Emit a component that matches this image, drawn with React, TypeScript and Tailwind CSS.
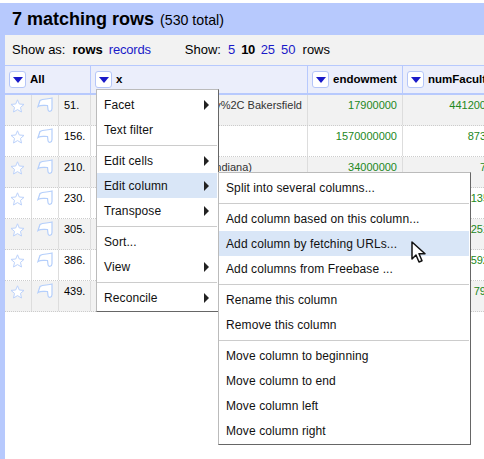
import React from 'react';

const rows = [
  { n: '51.', x: 'y%2C Bakersfield', e: '17900000', f: '441200' },
  { n: '156.', x: '', e: '1570000000', f: '873' },
  { n: '210.', x: 'ndiana)', e: '34000000', f: '7' },
  { n: '230.', x: '', e: '', f: '1135', wide: true },
  { n: '305.', x: '', e: '', f: '1251', wide: true },
  { n: '386.', x: '', e: '', f: '1592', wide: true },
  { n: '439.', x: '', e: '', f: '79' },
];

// Little square button with the blue triangle, used on each column header
function DropButton() {
  return (
    <span className="w-[17px] h-[17px] shrink-0 flex items-center justify-center rounded-[3px] border border-[#b5c6f8] bg-white">
      <span className="w-0 h-0 border-x-[5px] border-x-transparent border-t-[6px] border-t-[#1a1ac8]" />
    </span>
  );
}

function Star() {
  return (
    <svg width="15" height="14" viewBox="0 0 15 14" className="block">
      <path d="M7.500 .8l1.800 4.200 4.700.4-3.500 3 1 4.600-4-2.400-4 2.400 1-4.600-3.500-3 4.700-.4z" fill="#fff" stroke="#bcd2fb" strokeWidth="1" />
    </svg>
  );
}

function Flag() {
  return (
    <svg width="16" height="16" viewBox="0 0 16 16" className="block">
      <path d="M1 9.500L3 3.500C6 1.500 11 2.500 15 1V11.500C15 14.500 11.500 15.500 11 12.500L10.500 8.500C7 8.500 4 7.500 1 9.500z" fill="#fff" stroke="#b5cffb" strokeWidth="1.200" />
    </svg>
  );
}

function Arrow() {
  return <span className="absolute right-[8px] top-1/2 -translate-y-1/2 w-0 h-0 border-y-[5px] border-y-transparent border-l-[5px] border-l-[#222]" />;
}

function MenuItem({ label, sub, active }: { label: string; sub?: boolean; active?: boolean }) {
  return (
    <div className={`relative h-[25px] pl-[7px] flex items-center ${active ? 'bg-[#d9e6f7]' : ''}`}>
      {label}
      {sub && <Arrow />}
    </div>
  );
}

function Sep() {
  return <div className="h-px bg-[#ccc] my-[2.5px]" />;
}

function TableRow({ row, odd }: { row: (typeof rows)[number]; odd: boolean }) {
  return (
    <div className={`flex h-[31px] border-b border-dotted border-[#ccc] ${odd ? 'bg-[#f2f2f2]' : 'bg-white'}`}>
      <div className="w-[27px] shrink-0 border-r border-[#ddd] pl-[5px] pt-[4px]"><Star /></div>
      <div className="w-[27px] shrink-0 border-r border-[#ddd] pl-[5px] pt-[2px]"><Flag /></div>
      <div className="w-[32px] shrink-0 border-r border-[#ddd] pl-[5px] pt-[3px]">{row.n}</div>
      <div className="w-[217px] shrink-0 border-r border-[#ddd] pt-[3px] pr-[5px] text-right text-[#333] overflow-hidden whitespace-nowrap">
        {row.x === 'ndiana)' ? <span className="block pr-[50px]">{row.x}</span> : row.x}
      </div>
      <div className="w-[95px] shrink-0 border-r border-[#ddd] pt-[3px] pr-[5px] text-right text-[#282]">{row.e}</div>
      <div className={`w-[90px] shrink-0 pt-[3px] text-right text-[#282] ${row.wide ? 'pr-[4px]' : 'pr-[7px]'}`}>{row.f}</div>
    </div>
  );
}

export default function App() {
  return (
    <div className="relative w-[484px] h-[459px] overflow-hidden bg-white text-black font-['Liberation_Sans',Arial,sans-serif]">
      <div className="mt-[3px] h-[456px] bg-[#b7c9fd] pl-[5px] flex flex-col">
        <div className="h-[32px] shrink-0 pl-[7px] pt-[4px] flex items-baseline leading-[24px]">
          <span className="text-[18px] font-bold">7 matching rows</span>
          <span className="ml-[6px] text-[14.2px]">(530 total)</span>
        </div>
        <div className="flex-1 bg-white">
          <div className="h-[30px] bg-[#f2f2f2] flex items-center pl-[7px] whitespace-nowrap text-[13px]">
            <span>Show as:</span>
            <span className="font-bold ml-[7px]">rows</span>
            <span className="text-[#1a1ac8] ml-[6px] tracking-[-0.2px]">records</span>
            <span className="ml-[34px]">Show:</span>
            <span className="text-[#1a1ac8] ml-[7px]">5</span>
            <span className="font-bold ml-[6px] tracking-[-0.5px]">10</span>
            <span className="text-[#1a1ac8] ml-[6px]">25</span>
            <span className="text-[#1a1ac8] ml-[6px]">50</span>
            <span className="ml-[7px]">rows</span>
          </div>
          <div className="flex h-[29px] bg-[#ebeefb] border-y border-[#b7c9fd] font-bold whitespace-nowrap text-[11.5px]">
            <div className="w-[86px] shrink-0 border-r border-[#b7c9fd] pl-[4px] flex items-center gap-[4px]"><DropButton />All</div>
            <div className="w-[217px] shrink-0 border-r border-[#b7c9fd] pl-[4px] flex items-center gap-[4px]"><DropButton />x</div>
            <div className="w-[95px] shrink-0 border-r border-[#b7c9fd] pl-[4px] flex items-center gap-[4px]"><DropButton />endowment</div>
            <div className="w-[90px] shrink-0 pl-[4px] flex items-center gap-[4px]"><DropButton />numFaculty</div>
          </div>
          <div className="border-t border-[#b7c9fd] text-[11px] leading-[14px]">
            {rows.map((row, i) => (
              <TableRow key={row.n} row={row} odd={i % 2 === 0} />
            ))}
          </div>
        </div>
      </div>

      {/* Column menu */}
      <div className="absolute left-[96px] top-[89px] w-[123px] bg-white border border-[#bbb] border-r-[#666] border-b-[#666] pt-[2px] pb-px pr-px text-[12px] tracking-[0.1px] text-[#111]">
        <MenuItem label="Facet" sub />
        <MenuItem label="Text filter" />
        <Sep />
        <MenuItem label="Edit cells" sub />
        <MenuItem label="Edit column" sub active />
        <MenuItem label="Transpose" sub />
        <Sep />
        <MenuItem label="Sort..." />
        <MenuItem label="View" sub />
        <Sep />
        <MenuItem label="Reconcile" sub />
      </div>

      {/* Edit column submenu */}
      <div className="absolute left-[218px] top-[172px] w-[253px] bg-white border border-[#bbb] border-r-[#666] border-b-[#666] pt-[2px] pb-px pr-px text-[12px] tracking-[0.1px] text-[#111]">
        <MenuItem label="Split into several columns..." />
        <Sep />
        <MenuItem label="Add column based on this column..." />
        <MenuItem label="Add column by fetching URLs..." active />
        <MenuItem label="Add columns from Freebase ..." />
        <Sep />
        <MenuItem label="Rename this column" />
        <MenuItem label="Remove this column" />
        <Sep />
        <MenuItem label="Move column to beginning" />
        <MenuItem label="Move column to end" />
        <MenuItem label="Move column left" />
        <MenuItem label="Move column right" />
      </div>

      {/* Mouse pointer */}
      <svg width="16" height="24" viewBox="0 0 16 24" className="absolute left-[411px] top-[241px]">
        <path d="M1 1v17l4-4 3 7 3-1.300-3-7h6z" fill="#fff" stroke="#111" strokeWidth="1.500" strokeLinejoin="round" />
      </svg>
    </div>
  );
}
